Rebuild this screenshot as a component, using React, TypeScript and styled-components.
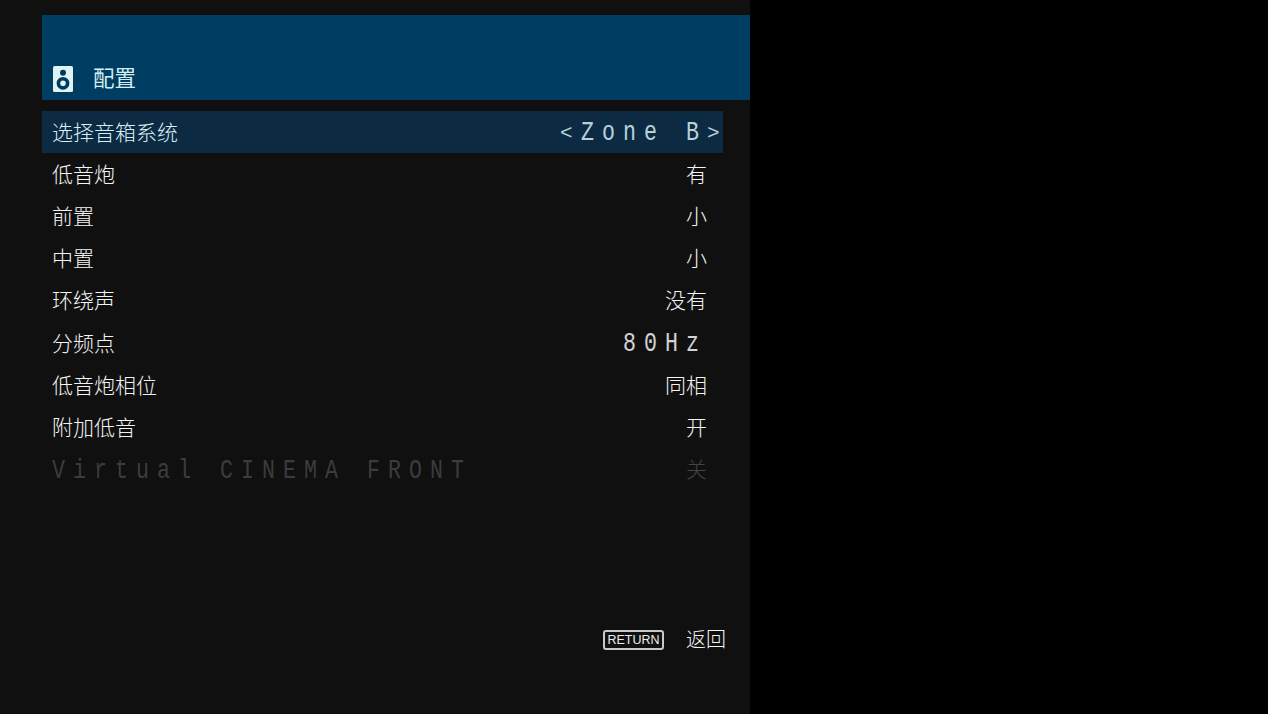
import styled, { createGlobalStyle } from "styled-components";

const GlobalStyle = createGlobalStyle`
  html, body {
    margin: 0;
    padding: 0;
    background: #000;
  }
`;

const Page = styled.div`
  width: 1268px;
  height: 714px;
  background: #000;
  overflow: hidden;
`;

const Screen = styled.div`
  width: 750px;
  height: 714px;
  box-sizing: border-box;
  padding: 15px 0 0 42px;
  background: #101011;
  display: flex;
  flex-direction: column;
  font-family: "Liberation Mono", "Noto Sans CJK SC", monospace;
  font-size: 21px;
  color: #e6e6e6;
`;

const Header = styled.div`
  height: 85px;
  box-sizing: border-box;
  padding: 0 0 8px 11px;
  background: #003d62;
  display: flex;
  align-items: flex-end;
  gap: 20px;
`;

const Title = styled.span`
  margin-bottom: 2px;
  font-family: "Noto Sans CJK SC", sans-serif;
  font-size: 21.5px;
  line-height: 26px;
  color: #d3eef2;
`;

const List = styled.div`
  margin-top: 11px;
  width: 681px;
  display: flex;
  flex-direction: column;
`;

const Row = styled.div<{ $selected?: boolean; $disabled?: boolean }>`
  height: 42.2px;
  box-sizing: border-box;
  padding: 0 16px 0 10px;
  display: flex;
  align-items: center;
  justify-content: space-between;
  background: ${(p) => (p.$selected ? "#0c2a42" : "transparent")};
  color: ${(p) =>
    p.$selected ? "#d8eef5" : p.$disabled ? "#444" : "#f4f4f4"};
`;

const Cjk = styled.span<{ $small?: boolean }>`
  padding-bottom: 3px;
  font-family: "Noto Sans CJK SC", sans-serif;
  font-size: ${(p) => (p.$small ? "20px" : "21px")};
  font-weight: 300;
  white-space: pre;
`;

// the OSD font is tall and narrow: 21px per character, squeezed from Liberation Mono
const Latin = styled.span<{ $chars: number }>`
  display: block;
  width: ${(p) => p.$chars * 21}px;
  padding-top: 2px;
  font-family: "Liberation Mono", monospace;
  font-size: 27px;
  line-height: 32px;
  letter-spacing: 10.05px;
  white-space: pre;
  opacity: 0.85;
  transform: scaleX(0.8);
  transform-origin: left center;
`;

const Arrow = styled.span<{ $right?: boolean }>`
  width: 21px;
  padding-top: 3px;
  font-family: "Liberation Mono", monospace;
  font-size: 21px;
  opacity: 0.85;
  margin-right: ${(p) => (p.$right ? "-21px" : "0")};
`;

const ValueGroup = styled.span`
  display: flex;
  align-items: center;
`;

const Footer = styled.div`
  margin-top: 133px;
  width: 684px;
  display: flex;
  justify-content: flex-end;
  align-items: center;
  gap: 22px;
  color: #f4f4f4;
`;

const ReturnBadge = styled.span`
  width: 61px;
  height: 20px;
  box-sizing: border-box;
  border: 2px solid #c8c8c8;
  border-radius: 3px;
  display: flex;
  align-items: center;
  justify-content: center;
  font-family: "Liberation Sans", sans-serif;
  font-size: 12.5px;
  color: #eee;
`;

function SpeakerIcon() {
  return (
    <svg width="20" height="26" viewBox="0 0 20 26">
      <rect width="20" height="26" rx="1.5" fill="#dff3f5" />
      <circle cx="10" cy="6.7" r="3" fill="#003a5e" />
      <circle cx="10" cy="17.3" r="4.6" fill="none" stroke="#003a5e" strokeWidth="3.6" />
    </svg>
  );
}

const rows = [
  { label: "低音炮", value: "有" },
  { label: "前置", value: "小" },
  { label: "中置", value: "小" },
  { label: "环绕声", value: "没有" },
  { label: "分频点", latinValue: "80Hz" },
  { label: "低音炮相位", value: "同相" },
  { label: "附加低音", value: "开" },
];

export default function App() {
  return (
    <Page>
      <GlobalStyle />
      <Screen>
        <Header>
          <SpeakerIcon />
          <Title>配置</Title>
        </Header>
        <List>
          <Row $selected>
            <Cjk>选择音箱系统</Cjk>
            <ValueGroup>
              <Arrow>&lt;</Arrow>
              <Latin $chars={6}>Zone B</Latin>
              <Arrow $right>&gt;</Arrow>
            </ValueGroup>
          </Row>
          {rows.map((r) => (
            <Row key={r.label}>
              <Cjk>{r.label}</Cjk>
              {r.latinValue ? (
                <Latin $chars={r.latinValue.length}>{r.latinValue}</Latin>
              ) : (
                <Cjk>{r.value}</Cjk>
              )}
            </Row>
          ))}
          <Row $disabled>
            <Latin $chars={20}>Virtual CINEMA FRONT</Latin>
            <Cjk>关</Cjk>
          </Row>
        </List>
        <Footer>
          <ReturnBadge>RETURN</ReturnBadge>
          <Cjk $small>返回</Cjk>
        </Footer>
      </Screen>
    </Page>
  );
}
